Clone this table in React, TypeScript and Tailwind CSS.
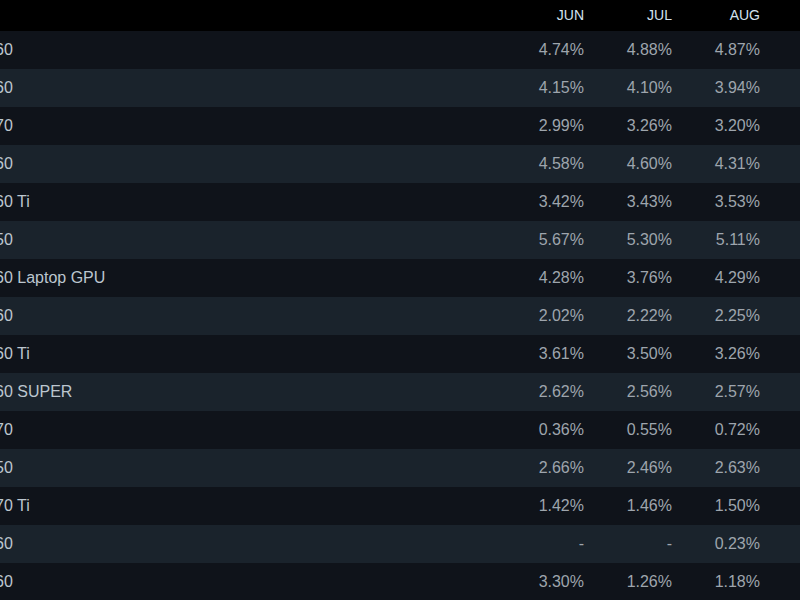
const months = ['JUN', 'JUL', 'AUG'];

const rows: { name: string; values: string[] }[] = [
  { name: '60', values: ['4.74%', '4.88%', '4.87%'] },
  { name: '60', values: ['4.15%', '4.10%', '3.94%'] },
  { name: '70', values: ['2.99%', '3.26%', '3.20%'] },
  { name: '60', values: ['4.58%', '4.60%', '4.31%'] },
  { name: '60 Ti', values: ['3.42%', '3.43%', '3.53%'] },
  { name: '50', values: ['5.67%', '5.30%', '5.11%'] },
  { name: '60 Laptop GPU', values: ['4.28%', '3.76%', '4.29%'] },
  { name: '60', values: ['2.02%', '2.22%', '2.25%'] },
  { name: '60 Ti', values: ['3.61%', '3.50%', '3.26%'] },
  { name: '60 SUPER', values: ['2.62%', '2.56%', '2.57%'] },
  { name: '70', values: ['0.36%', '0.55%', '0.72%'] },
  { name: '50', values: ['2.66%', '2.46%', '2.63%'] },
  { name: '70 Ti', values: ['1.42%', '1.46%', '1.50%'] },
  { name: '60', values: ['-', '-', '0.23%'] },
  { name: '60', values: ['3.30%', '1.26%', '1.18%'] },
];

export default function App() {
  return (
    <main
      className="w-[800px] h-[600px] overflow-hidden bg-[#0f131a]"
      style={{ fontFamily: '"Liberation Sans", Arial, sans-serif' }}
    >
      {/* HEADER */}
      <div className="flex h-[31px] items-center bg-black pr-[40px] pb-[2px] text-[14px] text-[#d3e2ef]">
        <div className="flex-1" />
        {months.map((m) => (
          <div key={m} className="w-[88px] text-right leading-none">
            {m}
          </div>
        ))}
      </div>

      {/* ROWS */}
      {rows.map((row, i) => (
        <div
          key={i}
          className={
            'flex h-[38px] items-center pr-[40px] pb-[1px] text-[16px] ' +
            (i % 2 === 0 ? 'bg-[#0f131a]' : 'bg-[#1a232c]')
          }
        >
          <div className="flex-1 whitespace-nowrap text-[#bcc6cf]">
            <span className="ml-[-5px] block">{row.name}</span>
          </div>
          {row.values.map((v, j) => (
            <div key={j} className="w-[88px] text-right text-[#9ea5ad]">
              {v}
            </div>
          ))}
        </div>
      ))}
    </main>
  );
}
